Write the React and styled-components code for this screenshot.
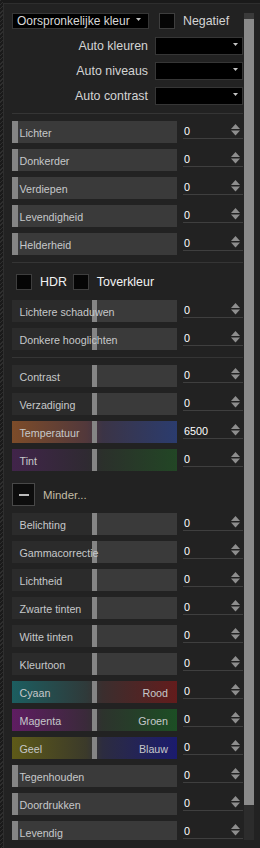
import React from "react";
import styled, { createGlobalStyle } from "styled-components";

const GlobalStyle = createGlobalStyle`
  *, *::before, *::after { box-sizing: border-box; }
  html, body { margin: 0; padding: 0; background: #222222; }
  body { font-family: "Liberation Sans", Arial, sans-serif; }
`;

const Frame = styled.div`
  display: flex;
  width: 260px;
  height: 848px;
  background: #222222;
  overflow: hidden;
`;

const EdgeStrip = styled.div`
  flex: none;
  width: 3px;
  background: repeating-linear-gradient(135deg, #2e2e2e 0 1px, #1a1a1a 1px 3px);
`;

const Main = styled.div`
  flex: 1;
  min-width: 0;
  display: flex;
  flex-direction: column;
`;

const TopStrip = styled.div`
  flex: none;
  height: 3px;
  background: #1a1a1a;
`;

const Panel = styled.div`
  flex: 1;
  display: flex;
  align-items: flex-start;
  background: #222222;
  border-top: 1px solid #2e2e2e;
  border-left: 1px solid #2e2e2e;
`;

const Content = styled.div`
  width: 239px;
  height: 836px;
  padding: 9px 0 0 8px;
  overflow: hidden;
  display: flex;
  flex-direction: column;
`;

const Scrollbar = styled.div`
  width: 10px;
  height: 827px;
  margin: 9px 0 0 1px;
  display: flex;
  flex-direction: column;
  background: #2c2c2c;
`;

const ScrollCap = styled.div`
  height: 6px;
  background: #3a3a3a;
`;

const ScrollThumb = styled.div`
  height: 786px;
  background: #8a8a8a;
`;

const TopRow = styled.div`
  display: flex;
  align-items: center;
  height: 16px;
`;

const Select = styled.div`
  display: flex;
  align-items: center;
  justify-content: space-between;
  width: ${(p) => p.$width}px;
  height: ${(p) => p.$height}px;
  padding: 0 ${(p) => p.$padRight}px 0 4px;
  background: #000000;
  border: 1px solid #363636;
  color: #d8d8d8;
  font-size: 12px;
  white-space: nowrap;

  svg {
    margin-bottom: 3px;
  }
`;

const Checkbox = styled.div`
  flex: none;
  width: 16px;
  height: 16px;
  margin-left: ${(p) => p.$gap || 0}px;
  background: #050505;
  border: 1px solid #3e3e3e;
`;

const CheckLabel = styled.span`
  margin-left: 8px;
  margin-right: ${(p) => p.$after || 0}px;
  color: ${(p) => (p.$bright ? "#f2f2f2" : "#d4d4d4")};
  font-size: 12.4px;
  white-space: nowrap;
`;

const AutoGroup = styled.div`
  display: flex;
  flex-direction: column;
  gap: 7px;
  margin-top: 8px;
`;

const AutoRow = styled.div`
  display: grid;
  grid-template-columns: 1fr 88px;
  column-gap: 6px;
  align-items: center;
  height: 18px;
`;

const AutoLabel = styled.span`
  text-align: right;
  color: #d4d4d4;
  font-size: 12.4px;
  padding-right: 1px;
`;

const Divider = styled.div`
  flex: none;
  height: 1px;
  margin-top: ${(p) => p.$top}px;
  background: #353535;
`;

const SliderGroup = styled.div`
  display: flex;
  flex-direction: column;
  gap: 6px;
  margin-top: ${(p) => p.$top}px;
`;

const SliderRow = styled.div`
  display: grid;
  grid-template-columns: 165px 60px;
  column-gap: 6px;
  height: 22px;
`;

const Track = styled.div`
  position: relative;
  display: flex;
  align-items: center;
  justify-content: space-between;
  height: 22px;
  padding: 0 9px 0 7.5px;
  background: ${(p) => p.$bg};
  color: #c6c8ca;
  font-size: 10.7px;
  white-space: nowrap;
`;

const Handle = styled.div`
  position: absolute;
  top: 0;
  bottom: 0;
  left: ${(p) => (p.$center ? 80 : 0)}px;
  width: ${(p) => (p.$center ? 5 : 6)}px;
  background: #858585;
`;

const TrackText = styled.span`
  position: relative;
  z-index: 1;
  padding-top: 1px;
`;

const NumberField = styled.div`
  display: flex;
  align-items: center;
  justify-content: space-between;
  height: 18px;
  padding: 0 3px 0 1px;
  border-bottom: 1px solid #3f3f3f;
  color: #ffffff;
  font-size: 10.8px;
`;

const NumberValue = styled.span`
  padding-top: 2px;
`;

const ToggleRow = styled.div`
  display: flex;
  align-items: center;
  height: 16px;
  margin-top: 11px;
  padding-left: 4px;
`;

const MoreRow = styled.div`
  display: flex;
  align-items: center;
  height: 23px;
  margin-top: 12px;
`;

const MoreButton = styled.div`
  display: flex;
  align-items: center;
  justify-content: center;
  width: 23px;
  height: 23px;
  background: #0d0d0d;
  border: 1px solid #484848;

  &::after {
    content: "";
    width: 10px;
    height: 2px;
    background: #bcbcbc;
  }
`;

const MoreLabel = styled.span`
  margin-left: 8px;
  color: #c5bda5;
  font-size: 11.4px;
`;

const Arrow = () => (
  <svg width="5" height="3" viewBox="0 0 5 3">
    <polygon points="0,0 5,0 2.5,3" fill="#c4c4c4" />
  </svg>
);

const Spinner = () => (
  <svg width="9" height="12" viewBox="0 0 9 12">
    <polygon points="0,5 4.5,0 9,5" fill="#8e8e8e" />
    <polygon points="0,6.5 9,6.5 4.5,11.5" fill="#8e8e8e" />
  </svg>
);

const neutralCenter = "linear-gradient(to right, #2b2b2b 0 80px, #3a3a3a 80px)";
const neutralStart = "#3a3a3a";

const gradients = {
  temp: "linear-gradient(to right, #7d4c29, #52383b 45%, #3b3446 55%, #2b3c6e)",
  tint: "linear-gradient(to right, #41244a, #2f2a32 45%, #2b302b 55%, #224625)",
  cyanRed: "linear-gradient(to right, #1c5e60, #2f3a3a 45%, #3b2e2e 55%, #631c1c)",
  magentaGreen: "linear-gradient(to right, #5f1d62, #3a2a3a 45%, #2d332d 55%, #1c4e24)",
  yellowBlue: "linear-gradient(to right, #5e5a18, #3b3a2a 45%, #2c2c40 55%, #1b1b6e)",
};

const Slider = ({ label, center, bg, right, value = "0" }) => (
  <SliderRow>
    <Track $bg={bg || (center ? neutralCenter : neutralStart)}>
      <Handle $center={center} />
      <TrackText>{label}</TrackText>
      {right && <TrackText>{right}</TrackText>}
    </Track>
    <NumberField>
      <NumberValue>{value}</NumberValue>
      <Spinner />
    </NumberField>
  </SliderRow>
);

const basic = ["Lichter", "Donkerder", "Verdiepen", "Levendigheid", "Helderheid"];

const toneSliders = [
  { label: "Lichtere schaduwen", center: true },
  { label: "Donkere hooglichten", center: true },
];

const colorSliders = [
  { label: "Contrast", center: true },
  { label: "Verzadiging", center: true },
  { label: "Temperatuur", center: true, bg: gradients.temp, value: "6500" },
  { label: "Tint", center: true, bg: gradients.tint },
];

const extraSliders = [
  { label: "Belichting", center: true },
  { label: "Gammacorrectie", center: true },
  { label: "Lichtheid", center: true },
  { label: "Zwarte tinten", center: true },
  { label: "Witte tinten", center: true },
  { label: "Kleurtoon", center: true },
  { label: "Cyaan", right: "Rood", center: true, bg: gradients.cyanRed },
  { label: "Magenta", right: "Groen", center: true, bg: gradients.magentaGreen },
  { label: "Geel", right: "Blauw", center: true, bg: gradients.yellowBlue },
  { label: "Tegenhouden" },
  { label: "Doordrukken" },
  { label: "Levendig" },
];

export default function App() {
  return (
    <>
      <GlobalStyle />
      <Frame>
        <EdgeStrip />
        <Main>
          <TopStrip />
          <Panel>
            <Content>
              <TopRow>
                <Select $width={137} $height={16} $padRight={7}>
                  Oorspronkelijke kleur
                  <Arrow />
                </Select>
                <Checkbox $gap={10} />
                <CheckLabel>Negatief</CheckLabel>
              </TopRow>

              <AutoGroup>
                {["Auto kleuren", "Auto niveaus", "Auto contrast"].map((l) => (
                  <AutoRow key={l}>
                    <AutoLabel>{l}</AutoLabel>
                    <Select $width={88} $height={18} $padRight={4}>
                      <span />
                      <Arrow />
                    </Select>
                  </AutoRow>
                ))}
              </AutoGroup>

              <Divider $top={8} />
              <SliderGroup $top={7}>
                {basic.map((l) => (
                  <Slider key={l} label={l} />
                ))}
              </SliderGroup>

              <Divider $top={7} />
              <ToggleRow>
                <Checkbox />
                <CheckLabel $bright $after={6}>HDR</CheckLabel>
                <Checkbox />
                <CheckLabel $bright>Toverkleur</CheckLabel>
              </ToggleRow>

              <SliderGroup $top={10}>
                {toneSliders.map((s) => (
                  <Slider key={s.label} {...s} />
                ))}
              </SliderGroup>

              <Divider $top={7} />
              <SliderGroup $top={7}>
                {colorSliders.map((s) => (
                  <Slider key={s.label} {...s} />
                ))}
              </SliderGroup>

              <MoreRow>
                <MoreButton />
                <MoreLabel>Minder...</MoreLabel>
              </MoreRow>

              <SliderGroup $top={7}>
                {extraSliders.map((s) => (
                  <Slider key={s.label} {...s} />
                ))}
              </SliderGroup>
            </Content>
            <Scrollbar>
              <ScrollCap />
              <ScrollThumb />
            </Scrollbar>
          </Panel>
        </Main>
      </Frame>
    </>
  );
}
